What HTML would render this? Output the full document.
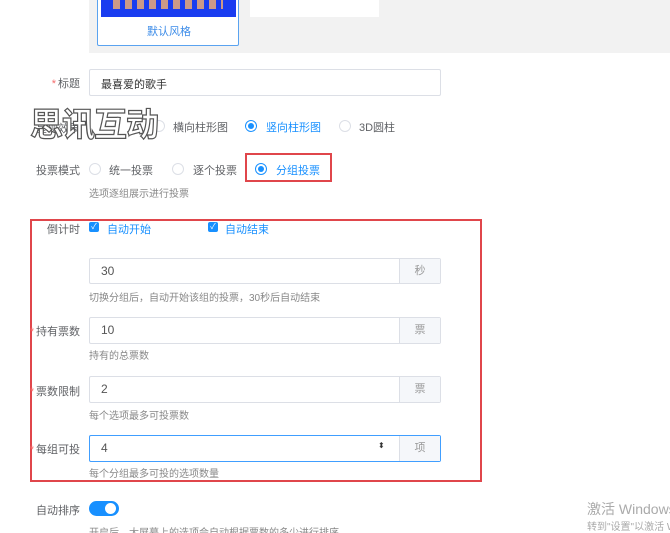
<!DOCTYPE html>
<html><head><meta charset="utf-8"><style>
body{margin:0;width:670px;height:533px;overflow:hidden;background:#fff;font-family:"Liberation Sans","Noto Sans CJK SC",sans-serif;font-size:11px;color:#606266;position:relative}
.wrap{position:absolute;left:0;top:0;width:670px;height:533px;overflow:hidden}
.a{position:absolute;white-space:nowrap}
.lbl{position:absolute;text-align:right;width:80px;left:0;font-size:11px;color:#606266}
.star{color:#f56c6c;margin-right:2px}
.inp{position:absolute;left:89px;width:350px;height:24px;border:1px solid #dcdfe6;border-radius:2px;background:#fff}
.inp span{position:absolute;left:11px;top:5px;font-size:12px;color:#555}
.add{position:absolute;right:0;top:0;width:40px;height:24px;background:#f5f7fa;border-left:1px solid #dcdfe6;text-align:center;line-height:24px;color:#999}
.hint{position:absolute;left:89px;font-size:10px;color:#888}
.r{position:absolute;width:10px;height:10px;border:1px solid #dcdfe6;border-radius:50%;background:#fff}
.r.on{border-color:#1890ff;background:#fff}
.r.on:after{content:"";position:absolute;left:2px;top:2px;width:6px;height:6px;border-radius:50%;background:#1890ff}
.cb{position:absolute;width:10px;height:10px;background:#1890ff;border-radius:2px;color:#fff;font-size:8px;line-height:10px;text-align:center}
.blue{color:#1890ff}
</style></head><body><div class="wrap">
<div class="a" style="left:89px;top:0;width:581px;height:53px;background:#f2f2f2"></div>
<div class="a" style="left:97px;top:-2px;width:140px;height:46px;border:1px solid #5aa3f0;background:#fff;border-radius:2px"></div>
<div class="a" style="left:101px;top:0;width:135px;height:17px;background:#1a3cf0"></div>
<div class="a" style="left:113px;top:0;width:110px;height:9px;background:repeating-linear-gradient(90deg,#c98 0 7px,#1a3cf0 7px 12px)"></div>
<div class="a blue" style="left:147px;top:23px;font-size:11px;color:#3b8be8">默认风格</div>
<div class="a" style="left:250px;top:0;width:129px;height:17px;background:#fff"></div>

<div class="lbl" style="top:75px"><span class="star">*</span>标题</div>
<div class="inp" style="top:69px;height:25px"><span style="top:6px;color:#333;font-size:11px">最喜爱的歌手</span></div>

<div class="lbl" style="top:120px">呈现效果</div>
<div class="r" style="left:153px;top:120px"></div><div class="a" style="left:173px;top:119px">横向柱形图</div>
<div class="r on" style="left:245px;top:120px"></div><div class="a blue" style="left:266px;top:119px">竖向柱形图</div>
<div class="r" style="left:339px;top:120px"></div><div class="a" style="left:359px;top:119px">3D圆柱</div>
<div class="a" style="left:30px;top:98px;font-size:33px;font-weight:bold;color:#fff;-webkit-text-stroke:1.2px #555;letter-spacing:-1px">思讯互动</div>

<div class="lbl" style="top:162px">投票模式</div>
<div class="r" style="left:89px;top:163px"></div><div class="a" style="left:109px;top:162px">统一投票</div>
<div class="r" style="left:172px;top:163px"></div><div class="a" style="left:193px;top:162px">逐个投票</div>
<div class="a" style="left:245px;top:153px;width:83px;height:25px;border:2px solid #e0464b"></div>
<div class="r on" style="left:255px;top:163px"></div><div class="a blue" style="left:276px;top:162px">分组投票</div>
<div class="hint" style="top:185px">选项逐组展示进行投票</div>

<div class="a" style="left:30px;top:219px;width:448px;height:259px;border:2px solid #e0464b"></div>
<div class="lbl" style="top:221px">倒计时</div>
<div class="cb" style="left:89px;top:222px">✓</div><div class="a blue" style="left:107px;top:221px">自动开始</div>
<div class="cb" style="left:208px;top:222px">✓</div><div class="a blue" style="left:225px;top:221px">自动结束</div>

<div class="inp" style="top:258px"><span>30</span><div class="add">秒</div></div>
<div class="hint" style="top:289px">切换分组后，自动开始该组的投票，30秒后自动结束</div>

<div class="lbl" style="top:323px"><span class="star">*</span>持有票数</div>
<div class="inp" style="top:317px;height:25px"><span>10</span><div class="add" style="height:25px">票</div></div>
<div class="hint" style="top:347px">持有的总票数</div>

<div class="lbl" style="top:383px"><span class="star">*</span>票数限制</div>
<div class="inp" style="top:376px;height:25px"><span>2</span><div class="add" style="height:25px">票</div></div>
<div class="hint" style="top:407px">每个选项最多可投票数</div>

<div class="lbl" style="top:441px"><span class="star">*</span>每组可投</div>
<div class="inp" style="top:435px;height:25px;border-color:#409eff"><span>4</span><div class="a" style="left:288px;top:5px;font-size:8px;color:#333">⬍</div><div class="add" style="height:25px">项</div></div>
<div class="hint" style="top:465px">每个分组最多可投的选项数量</div>

<div class="lbl" style="top:502px">自动排序</div>
<div class="a" style="left:89px;top:501px;width:30px;height:15px;border-radius:8px;background:#1890ff"></div>
<div class="a" style="left:105px;top:503px;width:11px;height:11px;border-radius:50%;background:#fff"></div>
<div class="hint" style="top:524px">开启后，大屏幕上的选项会自动根据票数的多少进行排序</div>

<div class="a" style="left:587px;top:499px;font-size:14px;color:#aaa">激活 Windows</div>
<div class="a" style="left:587px;top:518px;font-size:10px;color:#aaa">转到"设置"以激活 Windows。</div>
</div></body></html>
